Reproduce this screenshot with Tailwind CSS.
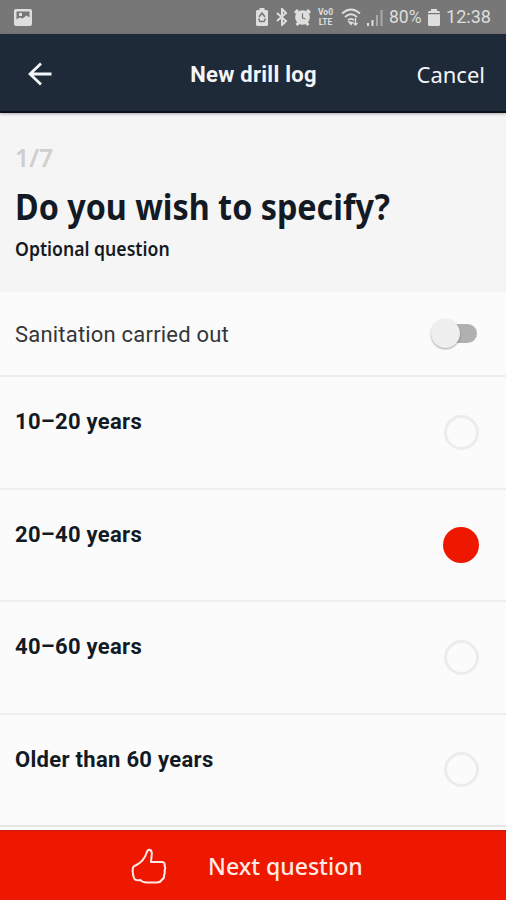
<!DOCTYPE html>
<html lang="en">
<head>
  <meta charset="UTF-8">
  <meta name="viewport" content="width=device-width, initial-scale=1.0">
  <title>New drill log</title>
  <script src="https://cdn.jsdelivr.net/npm/@tailwindcss/browser@4"></script>
</head>
<body class="bg-[#fbfbfb] font-['Roboto',sans-serif] text-[#131a24]">
  <div class="flex flex-col w-[506px] h-[900px] overflow-hidden">

    <!-- Status bar -->
    <div class="flex items-center h-[34px] shrink-0 bg-[#777777] text-[#dedede] pl-[14px] pr-[14px]">
      <svg class="w-[18px] h-[17px]" viewBox="0 0 18 17" fill="currentColor">
        <path fill-rule="evenodd" d="M2 0h14a2 2 0 0 1 2 2v13a2 2 0 0 1-2 2H2a2 2 0 0 1-2-2V2a2 2 0 0 1 2-2zM2.500 2.500v8l3-2 3 1 4-3 3 2v-6zM5 4h3v3H5z"/>
      </svg>
      <div class="flex items-center ml-auto">
        <svg class="w-[12px] h-[18px] mr-[8px]" viewBox="0 0 12 18">
          <path fill="currentColor" d="M3.500 0h5v2H11l1 1v14l-1 1H1l-1-1V3l1-1h2.500z"/>
          <path d="M3 9l3-4 3 4M2.500 10.500L4 13.500h4l1.500-3" fill="none" stroke="#777777" stroke-width="1.500"/>
        </svg>
        <svg class="w-[12px] h-[18px] mr-[6px]" viewBox="0 0 12 18" fill="none" stroke="currentColor" stroke-width="2">
          <path d="M1 5l9 8-4 4V1l4 4-9 8"/>
        </svg>
        <svg class="w-[17px] h-[17px] mr-[6px]" viewBox="0 0 17 17">
          <circle cx="8.500" cy="8.500" r="7.300" fill="currentColor"/>
          <path d="M1 4l3-3M16 4l-3-3M2.500 16l2.500-2.500M14.500 16l-2.500-2.500" stroke="currentColor" stroke-width="3"/>
          <path d="M8.500 4.500v4.500l3 1" fill="none" stroke="#777777" stroke-width="1.200"/>
        </svg>
        <div class="flex flex-col w-[17px] mr-[7px] text-[8.500px] leading-[10px] font-bold text-center">
          <span>Vo0</span>
          <span>LTE</span>
        </div>
        <svg class="w-[20px] h-[18px] mr-[6px]" viewBox="0 0 20 18" fill="none" stroke="currentColor" stroke-width="1.800">
          <path d="M1 5.500q9-8 18 0M4 9q6-5.500 12 0M7 12.200q3-2.700 6 0"/>
          <path d="M8 14l2 2.500 1.500-2zM14.500 10v7M12.500 15l2 2 2-2" stroke-width="1.300"/>
        </svg>
        <svg class="w-[16px] h-[17px] mr-[6px]" viewBox="0 0 16 17" fill="currentColor">
          <path d="M0 14h2v3H0zM4.500 11h2v6h-2z"/>
          <path opacity=".5" d="M9 6h2v11H9zM13.500 1h2v16h-2z"/>
        </svg>
        <span class="w-[33px] text-[19px] leading-[36px]"><span class="inline-block origin-left scale-x-92">80%</span></span>
        <svg class="w-[12px] h-[17px] ml-[6px] mr-[6px]" viewBox="0 0 12 17" fill="currentColor">
          <path d="M3 0h6v2h2l1 1v1H0V3l1-1h2zM0 5.200h12V16l-1 1H1l-1-1z"/>
        </svg>
        <span class="w-[46px] text-[19px] leading-[36px]"><span class="inline-block origin-left scale-x-95">12:38</span></span>
      </div>
    </div>

    <!-- App bar -->
    <header class="relative z-10 grid grid-cols-[180px_147px_1fr] items-center h-[79px] shrink-0 bg-[#1f2a38] border-b-2 border-[#0b111b] shadow-[0_1px_3px_rgba(0,0,0,0.3)] text-[#f3f5f8]">
      <svg class="w-[24px] h-[24px] ml-[28px] mt-[2px]" viewBox="0 0 24 24" fill="none" stroke="currentColor" stroke-width="2.800">
        <path d="M23.500 12H2M13 1.500L2 12l11 10.500"/>
      </svg>
      <h1 class="pt-[4px] text-center text-[22px] font-bold tracking-[0.25px] whitespace-nowrap">New drill log</h1>
      <a class="justify-self-end pt-[3px] pr-[21px] font-['Noto_Sans',sans-serif] text-[22px] whitespace-nowrap">Cancel</a>
    </header>

    <!-- Question -->
    <section class="h-[179px] shrink-0 bg-[#f5f5f5] pl-[15px] pt-[25px] font-['Noto_Sans',sans-serif]">
      <p class="h-[38px] leading-[38px] text-[26px] font-semibold text-[#cfcfcf]"><span class="inline-block origin-left scale-x-95">1/7</span></p>
      <h2 class="h-[61px] leading-[61px] text-[36px] font-bold whitespace-nowrap"><span class="inline-block origin-left scale-x-[0.897]">Do you wish to specify?</span></h2>
      <p class="h-[24px] leading-[24px] text-[19px] font-semibold whitespace-nowrap"><span class="inline-block origin-left scale-x-[0.928]">Optional question</span></p>
    </section>

    <!-- Answers -->
    <div class="flex items-center justify-between h-[85px] shrink-0 border-b-2 border-[#eeeeee] pl-[15px] pr-[29px]">
      <span class="pt-[2px] text-[22px] tracking-[0.2px] text-[#343638]">Sanitation carried out</span>
      <div class="flex items-center w-[46px] h-[30px]">
        <div class="z-10 w-[29px] h-[29px] rounded-full bg-[#eeeeee] shadow-[0_1px_2px_rgba(0,0,0,0.35)]"></div>
        <div class="-ml-[14px] w-[31px] h-[19px] rounded-full bg-[#b0b0b0]"></div>
      </div>
    </div>
    <div class="flex justify-between h-[112.500px] shrink-0 border-b-2 border-[#eeeeee] pl-[15px] pr-[27px]">
      <span class="pt-[28px] text-[22px] font-bold tracking-[0.3px]">10–20 years</span>
      <div class="mt-[38px] w-[35px] h-[35px] rounded-full border-3 border-[#ececec]"></div>
    </div>
    <div class="flex justify-between h-[112.500px] shrink-0 border-b-2 border-[#eeeeee] pl-[15px] pr-[27px]">
      <span class="pt-[28px] text-[22px] font-bold tracking-[0.3px]">20–40 years</span>
      <div class="mt-[37px] w-[36px] h-[36px] rounded-full bg-[#ee1700]"></div>
    </div>
    <div class="flex justify-between h-[112.500px] shrink-0 border-b-2 border-[#eeeeee] pl-[15px] pr-[27px]">
      <span class="pt-[28px] text-[22px] font-bold tracking-[0.3px]">40–60 years</span>
      <div class="mt-[38px] w-[35px] h-[35px] rounded-full border-3 border-[#ececec]"></div>
    </div>
    <div class="flex justify-between h-[112.500px] shrink-0 border-b-2 border-[#e4e6e4] pl-[15px] pr-[27px]">
      <span class="pt-[28px] text-[22px] font-bold tracking-[0.3px]">Older than 60 years</span>
      <div class="mt-[37px] w-[35px] h-[35px] rounded-full border-3 border-[#ececec]"></div>
    </div>

    <!-- Next button -->
    <button class="flex items-center mt-auto h-[70px] shrink-0 bg-[#ee1700] border-t border-[#c81a0c] pl-[131px] text-[#ffeae6]">
      <svg class="w-[36px] h-[36px]" viewBox="0 0 36 36" fill="none" stroke="currentColor" stroke-width="2" stroke-linejoin="round" stroke-linecap="round">
        <path d="M2 19.500Q3 17.500 5.500 17C11 14 14 10 15.500 5Q16.500 1.500 18.500 1.800Q21 2.500 20.800 6L20 14H31Q34.500 14.500 33.500 18Q35 20 33.500 22.500Q34.300 25 33 27Q33.500 30.500 31 31.500Q29.500 34.500 26 34.500H16Q11 34.300 9.500 32Q4 33 3 30Q1 25 2 19.500z"/>
      </svg>
      <span class="ml-[41px] pt-[1px] font-['Noto_Sans',sans-serif] text-[24px] font-medium whitespace-nowrap"><span class="inline-block origin-left scale-x-[0.96]">Next question</span></span>
    </button>
  </div>
</body>
</html>
